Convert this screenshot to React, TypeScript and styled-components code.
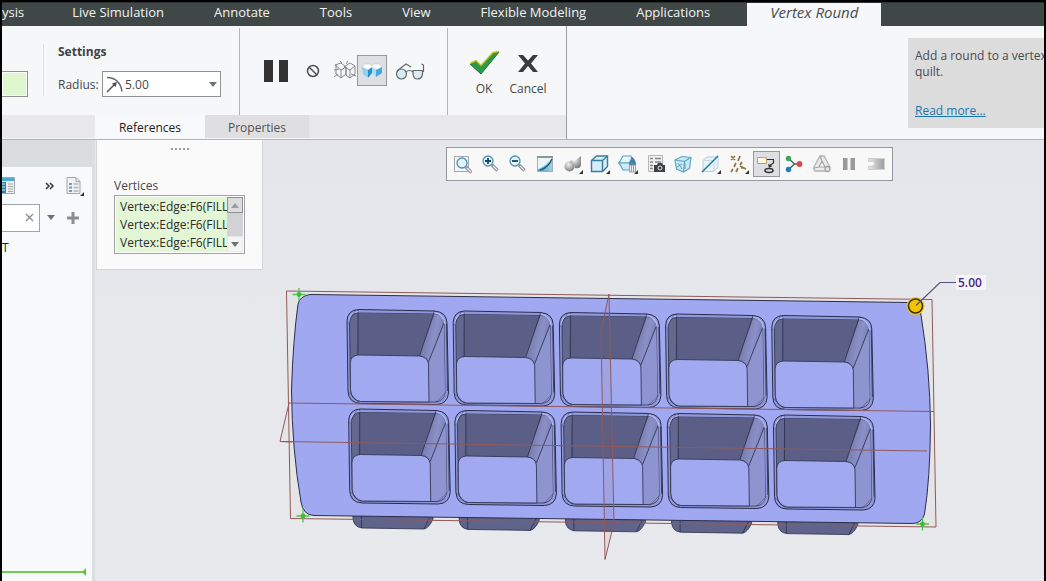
import React from 'react';
import styled, { createGlobalStyle, css } from 'styled-components';

const Global = createGlobalStyle`
  *, *::before, *::after { box-sizing: border-box; }
  body {
    margin: 0;
    background: #000;
    color: #45474a;
    font: 12px/16px "Open Sans", "Noto Sans", sans-serif;
  }
  button, input { font: inherit; color: inherit; margin: 0; padding: 0; border: 0; background: none; }
  button { cursor: pointer; }
  h2, h3, p, ul { margin: 0; padding: 0; }
  ul { list-style: none; }
  svg { display: block; flex: none; }
`;

const Window = styled.div`
  display: flex;
  flex-direction: column;
  min-height: 100vh;
  overflow: hidden;
  background: #f5f7f9;
  border: solid #000;
  border-width: 2px 2px 0 2px;
`;

/* ---------- ribbon tabs ---------- */

const TabBar = styled.nav`
  display: flex;
  height: 24px;
  background: #3f4747;
  border-top: 1px solid #2c3232;
`;

const RibbonTab = styled.button<{ $edge?: 'first' | 'last' }>`
  padding: 0 25px 5px;
  color: #f1f3f3;
  font-size: 13px;
  line-height: 18px;
  white-space: nowrap;
  ${p => p.$edge === 'first' && css`
    padding-left: 0;
    padding-right: 23px;
  `}
  ${p => p.$edge === 'last' && css`padding-right: 37px;`}
`;

const ContextTab = styled.button`
  padding: 0 23px 5px;
  background: #f5f7f9;
  color: #4a4d50;
  font-size: 15px;
  line-height: 18px;
  font-style: italic;
  white-space: nowrap;
`;

/* ---------- ribbon ---------- */

const Ribbon = styled.div`
  display: flex;
  justify-content: space-between;
  height: 114px;
  border-bottom: 1px solid #aab6b9;
`;

const RibbonMain = styled.div`
  display: flex;
  flex-direction: column;
  width: 565px;
  padding-top: 2px;
  border-right: 1px solid #9b9ea1;
`;

const Groups = styled.div`
  display: flex;
  height: 87px;
`;

const Group = styled.div<{ $width: number; $line?: boolean }>`
  display: flex;
  width: ${p => p.$width}px;
  border-right: ${p => (p.$line ? '1px solid #b4b6b9' : '0')};
`;

const Collector = styled.div`
  width: 26px;
  height: 26px;
  margin: 43px 15px 0 0;
  background: #dff7cf;
  border: 1px solid #8f9294;
  border-left: 0;
  box-shadow: inset 0 0 0 1px #fff;
`;

const Settings = styled.div`
  height: 52px;
  margin-top: 16px;
  padding-left: 14px;
  border-left: 1px solid #dcdee1;
`;

const GroupTitle = styled.h2`
  font-size: 12px;
  line-height: 16px;
  font-weight: 700;
  color: #404246;
`;

const Field = styled.div`
  display: flex;
  align-items: center;
  gap: 3px;
  margin-top: 11px;
`;

const FieldLabel = styled.label`
  width: 41px;
  padding-top: 1px;
`;

const Combo = styled.div`
  display: flex;
  align-items: center;
  width: 119px;
  height: 26px;
  padding: 0 3px;
  background: #fff;
  border: 1px solid #8f9294;
`;

const ComboInput = styled.input`
  flex: 1;
  min-width: 0;
  padding: 2px 0 0 2px;
  outline: 0;
`;

const IconButton = styled.button<{ $w?: number; $h?: number; $on?: boolean }>`
  display: flex;
  align-items: center;
  justify-content: center;
  width: ${p => (p.$w ? `${p.$w}px` : 'auto')};
  height: ${p => p.$h ?? 28}px;
  ${p => p.$on && css`
    background: #dedfe2;
    border: 1px solid #97999c;
  `}
`;

const PreviewGroup = styled(Group)`
  align-items: center;
  padding: 0 15px 2px 19px;
`;

const ActionGroup = styled(Group)`
  padding: 22px 0 0 18px;
  gap: 4px;
`;

const ActionButton = styled.button<{ $w: number }>`
  display: flex;
  flex-direction: column;
  align-items: center;
  gap: 5px;
  width: ${p => p.$w}px;
  height: 52px;
`;

const PanelTabs = styled.div`
  display: flex;
  height: 23px;
  background: #e8e8ea;
  padding-left: 93px;
`;

const PanelTab = styled.button<{ $w: number; $on?: boolean }>`
  width: ${p => p.$w}px;
  padding-top: 2px;
  background: ${p => (p.$on ? '#f8f9fa' : '#dfdfe1')};
  color: ${p => (p.$on ? '#1e2022' : '#505255')};
`;

const Help = styled.aside`
  display: flex;
  flex-direction: column;
  align-items: flex-start;
  width: 136px;
  height: 90px;
  margin-top: 12px;
  padding: 10px 0 0 7px;
  background: #dcdcdd;
`;

const HelpText = styled.p`
  width: 145px;
  color: #4a4b4e;
`;

const HelpLink = styled.a`
  margin-top: 23px;
  color: #1b76ae;
`;

/* ---------- sidebar ---------- */

const Work = styled.div`
  display: flex;
  flex: 1;
`;

const Sidebar = styled.div`
  display: flex;
  flex-direction: column;
  width: 93px;
  flex: none;
  background: #f7f9fa;
  border-right: 3px solid #dbdfe0;
`;

const SideHeader = styled.div`
  height: 27px;
  background: #d9dddd;
`;

const SideRow = styled.div<{ $h: number }>`
  display: flex;
  align-items: center;
  height: ${p => p.$h}px;
`;

const Chevrons = styled.button`
  display: flex;
  justify-content: center;
  width: 12px;
  margin: 0 8px 0 29px;
`;

const Search = styled.div`
  display: flex;
  align-items: center;
  width: 38px;
  height: 28px;
  background: #fff;
  border: 1px solid #9fa4a7;
  border-left: 0;
`;

const SearchInput = styled.input`
  width: 22px;
  outline: 0;
`;

const TreeItem = styled.div`
  line-height: 34px;
  color: #1f2123;
`;

const InsertMarker = styled.div`
  margin-top: auto;
  height: 13px;
`;

/* ---------- graphics area ---------- */

const Graphics = styled.main`
  position: relative;
  flex: 1;
  min-width: 0;
  background: linear-gradient(#e5e6eb, #e8e9ec);
`;

const RefPanel = styled.section`
  position: absolute;
  top: 0;
  left: 1px;
  width: 167px;
  height: 130px;
  padding: 7px 17px 0;
  background: #fafafa;
  border: 1px solid #d3d5d7;
  border-top-color: #fafafa;
`;

const Grip = styled.div`
  width: 18px;
  margin: 0 auto 27px;
  border-top: 2px dotted #9a9c9f;
`;

const PanelTitle = styled.h3`
  font-size: 12px;
  line-height: 18px;
  font-weight: 400;
`;

const ListBox = styled.div`
  display: flex;
  height: 59px;
  padding: 1px;
  background: #fff;
  border: 1px solid #9fa1a4;
`;

const List = styled.ul`
  flex: 1;
  min-width: 0;
  overflow: hidden;
  padding-top: 1px;
  background: #e3f6d6;
`;

const ListItem = styled.li`
  padding-left: 4px;
  line-height: 18px;
  white-space: nowrap;
  color: #2b2d2f;
`;

const Scroll = styled.div`
  display: flex;
  flex-direction: column;
  justify-content: space-between;
  width: 16px;
  background: #d2d2d4;
`;

const ScrollButton = styled.button<{ $up?: boolean }>`
  display: flex;
  align-items: center;
  justify-content: center;
  height: 16px;
  background: ${p => (p.$up ? '#dcdcde' : '#f4f4f5')};
  border: 1px solid ${p => (p.$up ? '#8e9093' : '#e8e8ea')};
`;

const ViewBar = styled.div`
  position: absolute;
  top: 7px;
  right: 151px;
  display: grid;
  grid-template-columns: repeat(16, 1fr);
  align-items: center;
  width: 447px;
  height: 34px;
  padding: 0 1px;
  background: #f8f8f9;
  border: 1px solid #95979a;
`;

const Scene = styled.svg`
  width: 100%;
  height: auto;
`;

/* ---------- icons ---------- */

const Icon = ({ s = 20, h, children }: { s?: number; h?: number; children: React.ReactNode }) => (
  <svg width={s} height={h ?? s} viewBox={`0 0 ${s} ${h ?? s}`} fill="none" aria-hidden="true">{children}</svg>
);

const Corner = () => <path d="M20 16v4h-4z" fill="#333" />;

const Lens = ({ x = 8, y = 8 }: { x?: number; y?: number }) => (
  <>
    <path d={`M${x + 4} ${y + 4}l5.500 5.500`} stroke="#8a8d90" strokeWidth="3.200" />
    <path d={`M${x + 5} ${y + 5}l4 4`} stroke="#f1f2f3" strokeWidth="1.300" />
    <circle cx={x} cy={y} r="5" fill="#e4f4fb" stroke="#4a93b8" strokeWidth="1.300" />
  </>
);

const viewTools: { name: string; on?: boolean; art: React.ReactNode }[] = [
  { name: 'Refit', art: <><path d="M2.500 2.500h14v15h-14z" fill="#f5f5f5" stroke="#a5a8aa" /><Lens x={10} y={9} /></> },
  { name: 'Zoom in', art: <><Lens x={8} y={7} /><path d="M5 7h6M8 4v6" stroke="#17465f" strokeWidth="1.800" /></> },
  { name: 'Zoom out', art: <><Lens x={8} y={7} /><path d="M5 7h6" stroke="#17465f" strokeWidth="1.800" /></> },
  {
    name: 'Repaint',
    art: <>
      <defs>
        <linearGradient id="paint" x1="0" y1="0" x2="1" y2="0"><stop stopColor="#3f9bc0" /><stop offset="1" stopColor="#9dd5e9" /></linearGradient>
      </defs>
      <path d="M2.500 3.500h15v14h-15z" fill="url(#paint)" stroke="#a8adb0" />
      <path d="M3 4h14C13 9 9 13 3 15.500z" fill="#eaf5f9" />
      <path d="M2 3h16" stroke="#8d9396" strokeWidth="2" />
      <path d="M17 5C15 10 11 14 5 16.500" stroke="#1f4f66" strokeWidth="1.200" />
    </>,
  },
  {
    name: 'Rendering options',
    art: <>
      <defs>
        <radialGradient id="ball" cx=".4" cy=".3" r=".8"><stop stopColor="#f2f2f2" /><stop offset="1" stopColor="#6d6f71" /></radialGradient>
      </defs>
      <circle cx="6.500" cy="12.500" r="5" fill="url(#ball)" />
      <path d="M8 6l3 1q2 0 3-2l4-3v9q-1 4-6 3-1-4-5-6z" fill="url(#ball)" />
      <Corner />
    </>,
  },
  {
    name: 'Display style',
    art: <>
      <path d="M1.500 6.500l5-4.500h11v10.500l-5 5h-11z" fill="#d5edf6" stroke="#3a7d9e" strokeWidth="1.400" />
      <path d="M1.500 6.500h11v11M12.500 6.500L17.500 2" stroke="#3a7d9e" strokeWidth="1.400" />
      <Corner />
    </>,
  },
  {
    name: 'Saved orientations',
    art: <>
      <path d="M5 2h8l2 7H1z" fill="#e9f6fa" stroke="#57a3c4" strokeWidth="1.200" />
      <path d="M1 9h11v7H5z" fill="#cfeaf4" stroke="#57a3c4" strokeWidth="1.200" />
      <path d="M11 11q0-5 3.500-8 3.500 3 3.500 8z" fill="#3f86a6" />
      <path d="M11.500 11h6v7h-6zM13.500 11v7M15.500 11v7" fill="#ececed" stroke="#95999b" strokeWidth=".9" />
      <Corner />
    </>,
  },
  {
    name: 'View manager',
    art: <>
      <path d="M2.500 1.500h14v16h-14z" fill="#efefef" stroke="#b4b6b8" />
      <path d="M4 4.500h3M9 4.500h6M4 8h3M9 8h6M4 11.500h3M4 14.500h3" stroke="#85888a" strokeWidth="1.300" />
      <path d="M8 11h3l1-2h4l1 2h2v7H8z" fill="#3d4042" />
      <circle cx="14" cy="14" r="2" fill="#3d4042" stroke="#e5e5e5" />
    </>,
  },
  {
    name: 'Perspective',
    art: <>
      <path d="M2 6l7-3.500 9 1-1.500 11-6 3.500-7-3z" fill="#cce8f2" stroke="#5ba8c6" strokeWidth="1.200" />
      <path d="M2 6l9.500 1.500-1 10.500M11.500 7.500l6-4" stroke="#5ba8c6" strokeWidth="1.200" />
      <path d="M5 9l4 6M4 13l5-3M12 9v6" stroke="#5d9cb8" />
    </>,
  },
  {
    name: 'Sections',
    art: <>
      <path d="M2 6.500L6 3h11v10l-4 4.500H2z" fill="#e6f3f8" stroke="#bccdd4" />
      <path d="M13 6.500h-11M13 6.500v11" stroke="#cbd9df" />
      <path d="M1 18L17 2" stroke="#2474a3" strokeWidth="1.500" />
      <Corner />
    </>,
  },
  {
    name: 'Datum display filters',
    art: <>
      <path d="M2 2l4 4M6 2L2 6M11 2L9 7M7 9l-2 4M13 8l-2 3M4 15l-2 3M9 14l-2 4M11 12l6 3M12 14h3" stroke="#927440" strokeWidth="1.700" />
      <Corner />
    </>,
  },
  {
    name: 'Annotation display',
    on: true,
    art: <>
      <path d="M1.500 3.500h9v6h-9z" fill="#fff8e6" stroke="#c0a05a" />
      <path d="M11 5.500h6.500v3.500l-4 2.500" stroke="#333" strokeWidth="1.200" />
      <path d="M12 10l1 4 3.500-2z" fill="#333" />
      <ellipse cx="13" cy="16.500" rx="4" ry="2" stroke="#333" strokeWidth="1.600" />
    </>,
  },
  {
    name: 'Spin center',
    art: <>
      <path d="M4.500 4.500l6 5.500-6 5.500M10 10h5" stroke="#555a5d" strokeWidth="1.400" />
      <circle cx="4.500" cy="4.500" r="2.700" fill="#3da65a" /><circle cx="15.500" cy="10" r="2.900" fill="#dd4848" /><circle cx="4.500" cy="15.500" r="2.700" fill="#1d7fb7" />
    </>,
  },
  {
    name: 'Simulation',
    art: <>
      <path d="M8 2h4l6 11-2 4H3l-1.500-3z" fill="#ececec" stroke="#b1b3b5" strokeWidth="1.300" />
      <path d="M10 7l3 6H7z M8 2l2 5M2 14l5-1M13 13l4 1" fill="#fafafa" stroke="#a3a5a7" strokeWidth="1.200" />
      <circle cx="15.500" cy="15" r="2.500" fill="#e4e4e4" stroke="#a0a2a4" strokeWidth="1.300" />
    </>,
  },
  { name: 'Pause', art: <path d="M4 4h4.500v12H4zM11.500 4H16v12h-4.500z" fill="#97999b" /> },
  {
    name: 'Resume',
    art: <>
      <defs><linearGradient id="fade"><stop stopColor="#e6e6e6" /><stop offset="1" stopColor="#9a9c9e" /></linearGradient></defs>
      <path d="M1.500 4.500h16v11h-16v-3q6 0 6-3t-6-2z" fill="url(#fade)" stroke="#cfd0d1" />
    </>,
  },
];

const Caret = ({ up }: { up?: boolean }) => (
  <Icon s={8} h={5}><path d={up ? 'M0 5l4-5 4 5z' : 'M0 0h8L4 5z'} fill={up ? '#9a9c9f' : '#6e7174'} /></Icon>
);

/* ---------- model ---------- */

const edge = '#2b2e48';
const datum = '#8f5a5c';

const Pocket = ({ x, y }: { x: number; y: number }) => (
  <g transform={`translate(${x} ${y})`} stroke={edge} strokeWidth=".8" fill="none" strokeLinejoin="round">
    <path d="M12 0.500L88 2Q100 3 100.500 14L102 84Q101 95 90 95.500L14 94.500Q2 94 1.500 82L0.500 12Q1 1 12 0.500z" fill="#9098dc" strokeWidth="1" />
    <path d="M3 13Q4 4 12 4L87 5Q96 6 97.500 15L98.500 83Q98 92.500 88 93L14 92.500Q5 91 4 81z" fill="#636890" />
    <path d="M11.500 4L88 5L73 46.500L10 45.500z" fill="#5b5f87" stroke="none" />
    <path d="M88 5Q96 6 97.500 13L82 53Q80 47 73 46.500z" fill="url(#wedge)" stroke="none" />
    <path d="M97.500 13L98.500 83Q98 92 88 92.500L82.500 92.500L82 53z" fill="#8d94cf" stroke="none" />
    <path d="M3.800 54Q4 46.500 12 46L73 47Q81 48 82 55L82.500 93L14 92.500Q5 91 4 81z" fill="#a1a9f1" />
    <path d="M11.500 1V46M88 2L73 47M97.500 14L82 53M100 15L101 82" />
    <path d="M2 14Q3 3 12 2.500M88 3.500Q97 5 98.500 15" stroke="#b7bdf6" strokeWidth="1.200" />
    <path d="M1 15L9 1M2 83L13 94M89 94L100 83" strokeWidth=".4" />
  </g>
);

const Foot = ({ x, y }: { x: number; y: number }) => (
  <g transform={`translate(${x} ${y})`} stroke={edge} strokeWidth=".8">
    <path d="M0 -3V3Q1 11 9 12L71 13Q76 12 80 3V-2z" fill="#5f648c" />
    <path d="M8.500 -2V12M71 13L77 1" />
  </g>
);

const PointMark = ({ x, y }: { x: number; y: number }) => (
  <g transform={`translate(${x} ${y})`}>
    <path d="M-6.500 0H6.500M0 -6.500V6.500" stroke="#4fc94c" strokeWidth="1.300" />
    <circle r="2.400" fill="#3fba3c" />
  </g>
);

const cols = [0, 1, 2, 3, 4];

const Model = () => (
  <Scene viewBox="95 140 949 441" role="img" aria-label="Tray model with vertex round preview">
    <defs>
      <linearGradient id="wedge" x1="0" y1="0" x2="1" y2="0.400">
        <stop stopColor="#666b96" /><stop offset=".7" stopColor="#8b91c8" /><stop offset="1" stopColor="#777db0" />
      </linearGradient>
    </defs>
    <path d="M286.500 291L932 299.500L936 527L290.500 518.500z" fill="#e6e5e6" />
    <path d="M289 403L280 441.500L292 442" fill="#e6e5e6" stroke={datum} />
    {cols.map(i => <Foot key={i} x={353 + i * 106.2} y={516 + i * 1.4} />)}
    <path d="M286.500 291L932 299.500L936 527L290.500 518.500z" fill="none" stroke={datum} />
    <path
      d="M310 294.500L910 302.500Q920 303 921 315Q930 370 930.500 425Q930 480 924.500 514Q922 523 913 523.500L314 515.500Q303 515 301 502Q292 450 291.500 390Q293 340 298 304Q300 296 310 294.500z"
      fill="#a0a8f1" stroke={edge}
    />
    {cols.map(i => <Pocket key={i} x={346.5 + i * 106.2} y={309 + i * 1.5} />)}
    {cols.map(i => <Pocket key={i} x={348.2 + i * 106.2} y={408.5 + i * 1.5} />)}
    <g fill="none" stroke={datum}>
      <path d="M289 403L934 411.500M280 441.500L927 451" />
      <path d="M609 294L601 331L605 559.500L614 523z" fill="#8a4a4c" fillOpacity=".07" />
    </g>
    <PointMark x={299} y={294.5} />
    <PointMark x={303} y={516} />
    <PointMark x={922.5} y={524} />
    <circle cx="915.500" cy="306" r="9" fill="#f7c70b" />
    <circle cx="915.500" cy="306" r="7" fill="#f5c400" stroke="#3c320e" strokeWidth="1.600" />
    <path d="M916 305.500L940 282.500H957" fill="none" stroke="#5c4f80" strokeWidth="1.200" />
    <path d="M956 275h30v15h-30z" fill="#f6f5fa" />
    <text x="958" y="287" fontSize="12" fontWeight="600" fill="#4c2583">5.00</text>
  </Scene>
);

const ribbonTabs = ['ysis', 'Live Simulation', 'Annotate', 'Tools', 'View', 'Flexible Modeling', 'Applications'];

export default function App() {
  return (
    <Window>
      <Global />
      <TabBar>
        {ribbonTabs.map((t, i) => (
          <RibbonTab key={t} $edge={i === 0 ? 'first' : i === ribbonTabs.length - 1 ? 'last' : undefined}>{t}</RibbonTab>
        ))}
        <ContextTab>Vertex Round</ContextTab>
      </TabBar>

      <Ribbon>
        <RibbonMain>
          <Groups>
            <Group $width={238} $line>
              <Collector />
              <Settings>
                <GroupTitle>Settings</GroupTitle>
                <Field>
                  <FieldLabel htmlFor="radius">Radius:</FieldLabel>
                  <Combo>
                    <Icon s={17}>
                      <path d="M1 1.500Q14 2 16 15.500" stroke="#66696c" strokeWidth="1.500" />
                      <path d="M1 16L9 8" stroke="#4b4e51" strokeWidth="1.400" /><path d="M11 6l-1.500 5-3.500-3.500z" fill="#4b4e51" />
                    </Icon>
                    <ComboInput id="radius" defaultValue="5.00" />
                    <IconButton $w={8} aria-label="Recent radii"><Caret /></IconButton>
                  </Combo>
                </Field>
              </Settings>
            </Group>
            <PreviewGroup $width={208} $line>
              <IconButton $w={34} aria-label="Pause">
                <Icon s={26} h={24}><path d="M1 1h9v22H1zM16 1h9v22h-9z" fill="#333132" /></Icon>
              </IconButton>
              <IconButton $w={40} aria-label="No preview">
                <Icon s={14}><circle cx="7" cy="7" r="5.500" stroke="#4b4d50" strokeWidth="1.500" /><path d="M3 3l8 8" stroke="#4b4d50" strokeWidth="1.400" /></Icon>
              </IconButton>
              <IconButton $w={25} aria-label="Unattached preview">
                <Icon s={22} h={20}>
                  <path d="M1 4l6-2 5 4-5 3zM2 4v9l5 4V9M12 6v7l-5 4M10 6l6-4 5 3-5 4zM12 6v8l4 3V9M21 5v8l-5 4M0 16l4-3M8 2L6 0M12 3l2-3M0 9l5-1M17 13l5 2" stroke="#7b7e81" strokeWidth=".9" />
                </Icon>
              </IconButton>
              <IconButton $w={30} $h={31} $on aria-label="Attached preview">
                <Icon s={20} h={16}>
                  <path d="M0 4l3-3h5l2 2 2-2h5l3 3-4 3-5-2-5 2z" fill="#fff" stroke="#c3cdd2" strokeWidth=".6" />
                  <path d="M0 4l6 3v8l-5-4z" fill="#8ccfee" /><path d="M6 7l4-3v6l-4 5z" fill="#2b8fc8" />
                  <path d="M10 4l4 3v7l-4-4z" fill="#a9dcf3" /><path d="M14 7l6-3v6l-6 4z" fill="#41a8dc" />
                </Icon>
              </IconButton>
              <IconButton $w={45} aria-label="Verify">
                <Icon s={30} h={18}>
                  <circle cx="6.500" cy="12" r="5" fill="#d7ecf3" stroke="#66696c" strokeWidth="1.200" />
                  <path d="M18 8.500h9.500v4q-1 4.500-5 4.500t-4.500-5z" fill="#d7ecf3" stroke="#66696c" strokeWidth="1.200" />
                  <path d="M11 10q3-3 7 0M2 9L11 2l5 3M28.500 10V3l-2-1" stroke="#66696c" strokeWidth="1.200" />
                </Icon>
              </IconButton>
            </PreviewGroup>
            <ActionGroup $width={118}>
              <ActionButton $w={36}>
                <Icon s={32} h={26}>
                  <path d="M2 14l6-3 5 5L25 3l6-1L13 24z" fill="#2c9a47" stroke="#1d6e33" />
                  <path d="M2 13.500l6-3 5 5L25 2.500l6-1" stroke="#c8c520" strokeWidth="1.400" />
                </Icon>
                OK
              </ActionButton>
              <ActionButton $w={44}>
                <Icon s={22} h={26}><path d="M1 5h5l5 5.500L16 5h5l-7 8.500 7 8.500h-5l-5-6-5 6H1l7-8.500z" fill="#3a3b3d" /></Icon>
                Cancel
              </ActionButton>
            </ActionGroup>
          </Groups>
          <PanelTabs>
            <PanelTab $w={110} $on>References</PanelTab>
            <PanelTab $w={104}>Properties</PanelTab>
          </PanelTabs>
        </RibbonMain>
        <Help>
          <HelpText>Add a round to a vertex quilt.</HelpText>
          <HelpLink href="#help">Read more...</HelpLink>
        </Help>
      </Ribbon>

      <Work>
        <Sidebar>
          <SideHeader />
          <SideRow $h={37}>
            <Icon s={13} h={17}>
              <path d="M-1 .500h13.500v16H-1z" fill="#eef0f1" stroke="#a3a6a9" /><path d="M0 1h12v3H0z" fill="#4aa8d2" />
              <path d="M0 5h4v11H0z" fill="#2f7fb0" /><path d="M0 7h3M0 10h3M0 13h3" stroke="#d7ecf6" /><path d="M6 7h5M6 9.500h5M6 12h5M6 14.500h5" stroke="#a2a5a8" />
            </Icon>
            <Chevrons aria-label="More">
              <Icon s={10} h={8}><path d="M1 1l3 3-3 3M5 1l3 3-3 3" stroke="#35373a" strokeWidth="1.500" /></Icon>
            </Chevrons>
            <IconButton $w={20} aria-label="Settings">
              <Icon s={20}>
                <path d="M3 1.500h9l4 4v12H3z" fill="#f0f1f2" stroke="#a3a6a9" /><path d="M12 1.500v4h4" stroke="#a3a6a9" />
                <path d="M5 8h3M5 11.500h3M5 15h3" stroke="#6a9fbd" strokeWidth="2" /><path d="M9.500 8h5M9.500 11.500h5M9.500 15h5" stroke="#b2b5b8" strokeWidth="1.500" />
                <Corner />
              </Icon>
            </IconButton>
          </SideRow>
          <SideRow $h={27}>
            <Search>
              <SearchInput aria-label="Search tree" />
              <IconButton $w={11} aria-label="Clear">
                <Icon s={9}><path d="M1 1l7 7M8 1L1 8" stroke="#8a8d90" strokeWidth="1.300" /></Icon>
              </IconButton>
            </Search>
            <IconButton $w={22} aria-label="Search options"><Caret /></IconButton>
            <IconButton $w={22} aria-label="Add">
              <Icon s={12}><path d="M6 0v12M0 6h12" stroke="#8b8e91" strokeWidth="3" /></Icon>
            </IconButton>
          </SideRow>
          <TreeItem>T</TreeItem>
          <InsertMarker>
            <Icon s={84} h={8}><path d="M0 4h82" stroke="#6cd04c" strokeWidth="2" /><path d="M84 0v8l-4-4z" fill="#5cc83c" /></Icon>
          </InsertMarker>
        </Sidebar>

        <Graphics>
          <Model />
          <RefPanel>
            <Grip />
            <PanelTitle id="vertices">Vertices</PanelTitle>
            <ListBox>
              <List role="listbox" aria-labelledby="vertices">
                {[0, 1, 2].map(i => <ListItem key={i} role="option">Vertex:Edge:F6(FILL</ListItem>)}
              </List>
              <Scroll>
                <ScrollButton $up aria-label="Scroll up"><Caret up /></ScrollButton>
                <ScrollButton aria-label="Scroll down"><Caret /></ScrollButton>
              </Scroll>
            </ListBox>
          </RefPanel>
          <ViewBar role="toolbar" aria-label="View">
            {viewTools.map(t => (
              <IconButton key={t.name} $h={t.on ? 26 : 24} $on={t.on} aria-label={t.name} title={t.name}>
                <Icon>{t.art}</Icon>
              </IconButton>
            ))}
          </ViewBar>
        </Graphics>
      </Work>
    </Window>
  );
}
